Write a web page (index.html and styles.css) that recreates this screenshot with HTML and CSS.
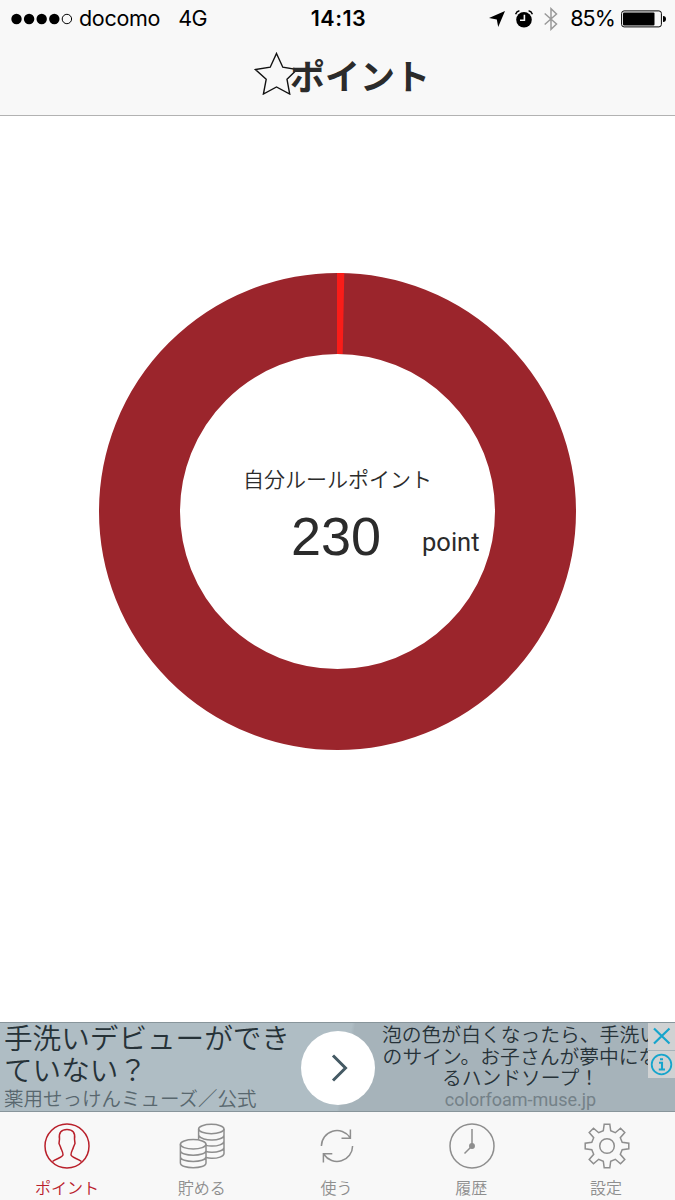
FILE: index.html
```html
<!DOCTYPE html>
<html lang="ja">
<head>
  <meta charset="UTF-8">
  <title>ポイント</title>
  <link rel="stylesheet" href="styles.css">
</head>
<body>
  <header class="header">
    <div class="status">
      <div class="status-left">
        <svg class="signal" width="62" height="12" viewBox="0 0 62 12">
          <circle cx="5.5" cy="6" r="5.2"/>
          <circle cx="18.1" cy="6" r="5.2"/>
          <circle cx="30.7" cy="6" r="5.2"/>
          <circle cx="43.3" cy="6" r="5.2"/>
          <circle cx="55.9" cy="6" r="4.7" fill="none" stroke="#000" stroke-width="1"/>
        </svg>
        <span class="carrier">docomo</span>
        <span class="network">4G</span>
      </div>
      <div class="time">14:13</div>
      <div class="status-right">
        <svg class="location" width="18" height="18" viewBox="0 0 18 18">
          <path d="M17 1L10.2 17L8.8 9.4L1 8Z"/>
        </svg>
        <svg class="alarm" width="20" height="20" viewBox="0 0 20 20">
          <circle cx="10" cy="10.8" r="7.8"/>
          <path d="M1.6 5.2A5 5 0 0 1 5.4 1.8M14.6 1.8A5 5 0 0 1 18.4 5.2" fill="none" stroke="#000" stroke-width="1.4"/>
          <path d="M10.4 5.8V11.2H6" fill="none" stroke="#f8f8f8" stroke-width="1.6"/>
        </svg>
        <svg class="bluetooth" width="16" height="24" viewBox="0 0 16 24">
          <path d="M1.7 6.5L13.5 17L8 22.3V1.7L13.5 7L1.7 17.5" fill="none" stroke="#999" stroke-width="1.5"/>
        </svg>
        <span class="percent">85%</span>
        <svg class="battery" width="45" height="18" viewBox="0 0 45 18">
          <rect x="0.6" y="0.9" width="39.8" height="16" rx="2.5" fill="none" stroke="#000" stroke-width="1"/>
          <rect x="2" y="2.4" width="31.5" height="13" rx="1"/>
          <path d="M42 6A3 3 0 0 1 42 12Z"/>
        </svg>
      </div>
    </div>
    <h1 class="title">
      <svg class="star" width="44" height="44" viewBox="0 0 44 44">
        <path d="M22.5 2.5L28.8 16.2L43 18.6L33 28.3L35.7 43L22.5 36L9.4 43L12.2 28.3L1.4 18.6L16.2 16.2Z" fill="none" stroke="#111" stroke-width="1.4"/>
      </svg>
      <span class="title-text">ポイント</span>
    </h1>
  </header>

  <main class="main">
    <div class="chart">
      <svg class="ring" width="477" height="477" viewBox="0 0 477 477">
        <circle cx="238.5" cy="238.5" r="198" fill="none" stroke="#9b252c" stroke-width="81"/>
        <path d="M238 0H245.3L243.7 81H238Z" fill="#f91d19"/>
      </svg>
      <div class="summary">
        <div class="rule">自分ルールポイント</div>
        <div class="score">
          <span class="number">230</span>
          <span class="unit">point</span>
        </div>
      </div>
    </div>
  </main>

  <section class="ad">
    <div class="ad-left">
      <div class="ad-title">手洗いデビューができ<br>ていない？</div>
      <div class="ad-brand">薬用せっけんミューズ／公式</div>
    </div>
    <div class="ad-arrow">
      <svg width="74" height="74" viewBox="0 0 74 74">
        <path d="M32 24.5L44.5 37L32 49.5" fill="none" stroke="#455a64" stroke-width="3"/>
      </svg>
    </div>
    <div class="ad-right">
      <div class="ad-text">泡の色が白くなったら、手洗い<br>のサイン。お子さんが夢中にな<br>るハンドソープ！</div>
      <div class="ad-url">colorfoam-muse.jp</div>
    </div>
    <div class="ad-buttons">
      <svg width="27" height="27" viewBox="0 0 27 27">
        <path d="M6 5.5L21.5 20.5M21.5 5.5L6 20.5" stroke="#16a5cc" stroke-width="2.2"/>
      </svg>
      <svg width="27" height="27" viewBox="0 0 27 27">
        <circle cx="13.5" cy="13.5" r="9.8" fill="none" stroke="#16a5cc" stroke-width="1.8"/>
        <path d="M11 11.7H14V18M10.8 18.5H17M12 8.2H15" fill="none" stroke="#16a5cc" stroke-width="2.1"/>
      </svg>
    </div>
  </section>

  <nav class="tabs">
    <div class="tab active">
      <svg class="icon" width="48" height="48" viewBox="0 0 48 48">
        <circle cx="24" cy="24" r="22"/>
        <path d="M9.5 39.5C13 36.5 20 35.5 20 32.8C20 29.5 18.3 28 17.5 25L16 21.5L16.5 17C15.5 10.5 18.5 7.5 24 7.5S32.5 10.5 31.5 17L32 21.5L30.5 25C29.7 28 28 29.5 28 32.8C28 35.5 35 36.5 38.5 39.5"/>
      </svg>
      <span>ポイント</span>
    </div>
    <div class="tab">
      <svg class="icon" width="48" height="48" viewBox="0 0 48 48">
        <ellipse cx="33.3" cy="7" rx="12.7" ry="4.7"/>
        <path d="M20.6 7V17.5M46 7V31.5C46 34.5 39.5 36.5 33.3 36.3C31.3 36.3 29.6 36 28 35.6M46 13.2C46 16.2 39.5 18.2 33.3 18C29 18 22 16.7 20.6 13.2M46 19.3C46 22.3 39.5 24.3 33.3 24.1C31.3 24.1 29.6 23.9 28 23.4M46 25.4C46 28.4 39.5 30.4 33.3 30.2C31.3 30.2 29.6 30 28 29.5"/>
        <ellipse cx="15.2" cy="22.3" rx="12.8" ry="4.7"/>
        <path d="M2.4 22.3V41C2.4 47.3 28 47.3 28 41V22.3M2.4 28.5C2.4 34.8 28 34.8 28 28.5M2.4 34.8C2.4 41 28 41 28 34.8"/>
      </svg>
      <span>貯める</span>
    </div>
    <div class="tab">
      <svg class="icon" width="48" height="48" viewBox="0 0 48 48">
        <path d="M8.4 24A15.6 15.6 0 0 1 37 15.5M28.5 16.2H37.4V7.5"/>
        <path d="M39.6 24A15.6 15.6 0 0 1 11 32.5M19.3 31.8H10.4V40.5"/>
      </svg>
      <span>使う</span>
    </div>
    <div class="tab">
      <svg class="icon" width="48" height="48" viewBox="0 0 48 48">
        <circle cx="24" cy="24" r="22"/>
        <path d="M24 7V24L16.5 31.5"/>
        <circle cx="24" cy="24" r="2.2" fill="currentColor"/>
      </svg>
      <span>履歴</span>
    </div>
    <div class="tab">
      <svg class="icon" width="48" height="48" viewBox="0 0 48 48">
        <path d="M21.2 2.2H26.8L27.7 8.8L32.3 10.7L37.5 6.2L41.8 10.5L37.3 15.7L39.2 20.3L45.8 21.2V26.8L39.2 27.7L37.3 32.3L41.8 37.5L37.5 41.8L32.3 37.3L27.7 39.2L26.8 45.8H21.2L20.3 39.2L15.7 37.3L10.5 41.8L6.2 37.5L10.7 32.3L8.8 27.7L2.2 26.8V21.2L8.8 20.3L10.7 15.7L6.2 10.5L10.5 6.2L15.7 10.7L20.3 8.8Z"/>
        <circle cx="24" cy="24" r="7.3"/>
      </svg>
      <span>設定</span>
    </div>
  </nav>
</body>
</html>
```

FILE: styles.css
```css
* {
  box-sizing: border-box;
}

body {
  margin: 0;
  width: 675px;
  height: 1200px;
  display: flex;
  flex-direction: column;
  background: #fff;
  color: #2b2b2b;
  font-family: "Noto Sans CJK JP", sans-serif;
  overflow: hidden;
}

.header {
  height: 116px;
  background: #f8f8f8;
  border-bottom: 1px solid #b2b2b2;
}

.status {
  display: grid;
  grid-template-columns: 1fr auto 1fr;
  align-items: center;
  height: 37px;
  padding: 0 9px 0 11px;
  color: #000;
  font-family: Inter, sans-serif;
  font-size: 21.5px;
  line-height: 37px;
}

.status-left, .status-right {
  display: flex;
  align-items: center;
}

.status-right {
  justify-content: flex-end;
}

.carrier {
  margin-left: 6px;
  letter-spacing: -0.3px;
}

.network {
  margin-left: 18px;
  letter-spacing: -0.5px;
}

.time {
  font-weight: 600;
  letter-spacing: 0.5px;
}

.alarm {
  margin-left: 8px;
}

.bluetooth {
  margin: 0 11px 0 9px;
}

.percent {
  letter-spacing: -0.9px;
}

.battery {
  margin-left: 6px;
}

.title {
  display: flex;
  justify-content: center;
  align-items: center;
  height: 71px;
  margin: 0;
  padding-left: 9px;
  font-size: 35px;
  font-weight: 700;
}

.star {
  margin-right: -8px;
}

.title-text {
  padding-top: 3px;
}

.main {
  flex: 1;
  display: flex;
  justify-content: center;
  padding-top: 157px;
}

.chart {
  display: grid;
  width: 477px;
  height: 477px;
}

.ring, .summary {
  grid-area: 1 / 1;
}

.summary {
  padding-top: 189px;
  text-align: center;
}

.rule {
  font-size: 21px;
  font-weight: 350;
  line-height: 32px;
}

.score {
  display: grid;
  grid-template-columns: 1fr auto 1fr;
  align-items: start;
  padding-right: 3px;
  font-family: "Liberation Sans", sans-serif;
}

.number {
  grid-column: 2;
  font-size: 54px;
  line-height: 85px;
}

.unit {
  padding-left: 41px;
  font-family: Roboto, sans-serif;
  font-size: 25.5px;
  line-height: 97px;
  text-align: left;
}

.ad {
  position: relative;
  display: flex;
  height: 90px;
  background: linear-gradient(100deg, #afbdc4 51%, #a6b3ba 51.5%);
  border-top: 1px solid #88959b;
  border-bottom: 1px solid #88959b;
  color: #263238;
  white-space: nowrap;
}

.ad-left {
  width: 301px;
  padding-left: 4px;
}

.ad-title {
  margin-top: -2px;
  font-size: 28.6px;
  font-weight: 350;
  line-height: 32px;
}

.ad-brand {
  color: #58676e;
  font-size: 19.5px;
  font-weight: 350;
  line-height: 26px;
}

.ad-arrow {
  width: 74px;
  height: 74px;
  margin-top: 8px;
  border-radius: 50%;
  background: #fff;
}

.ad-right {
  width: 277px;
  margin-left: 7px;
  text-align: center;
}

.ad-text {
  font-size: 19.8px;
  font-weight: 350;
  line-height: 21.5px;
}

.ad-url {
  color: #748188;
  font-family: Roboto, sans-serif;
  font-size: 18px;
  line-height: 24px;
}

.ad-buttons {
  position: absolute;
  top: 0;
  right: 0;
  display: flex;
  flex-direction: column;
  gap: 1px;
}

.ad-buttons svg {
  background: #d0d2d3;
}

.tabs {
  display: flex;
  height: 88px;
  padding: 10px 1px 0 0;
  background: #f8f8f8;
}

.tab {
  flex: 1;
  display: flex;
  flex-direction: column;
  align-items: center;
  color: #8e8e8e;
  font-size: 16px;
  font-weight: 350;
  line-height: 34px;
}

.tab span {
  margin-right: 1px;
}

.active {
  color: #b9202b;
}

.icon {
  flex: none;
  fill: none;
  stroke: currentColor;
  stroke-width: 1.5;
}
```
